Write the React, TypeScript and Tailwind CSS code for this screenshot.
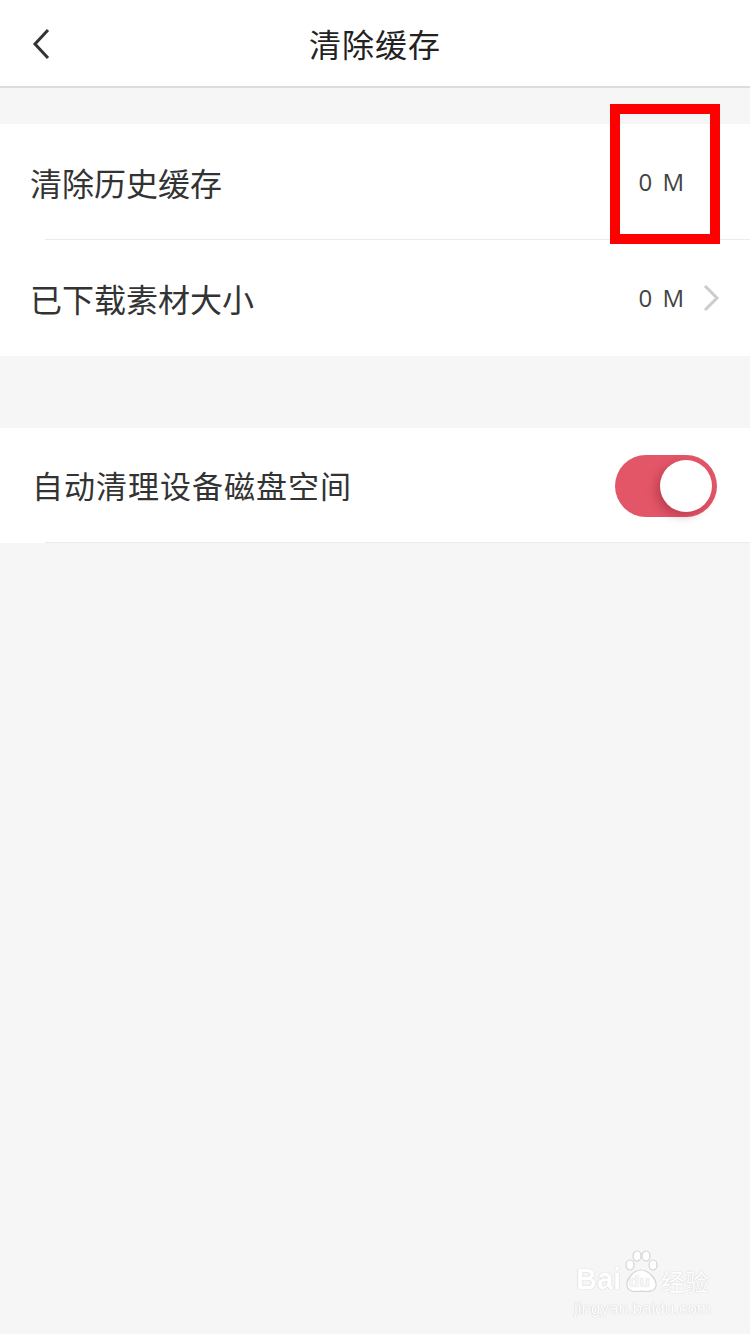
import React from 'react';

const cjk = { fontFamily: '"Noto Sans CJK SC", "Noto Sans", sans-serif' };
const latin = { fontFamily: 'Arial, "Liberation Sans", sans-serif' };

function Row({ label, big, right, divider, h = 'h-[115px]' }: { label: string; big?: boolean; right?: React.ReactNode; divider?: boolean; h?: string }) {
    return (
        <div className={`relative bg-white ${h} flex items-center justify-between pl-[30px] pr-[30px]`}>
            <span className={big ? 'text-[31px] text-[#333] tracking-[1px] pl-[2px]' : 'text-[32px] text-[#333]'}>{label}</span>
            {right}
            {/* divider line, inset from the left */}
            {divider && <div className="absolute left-[45px] right-0 bottom-0 h-px bg-[#ebebeb]" />}
        </div>
    );
}

function Value({ arrow }: { arrow?: boolean }) {
    return (
        <div className="flex items-center">
            <span className="text-[24px] text-[#444] tracking-[2px]" style={{ fontFamily: '"Open Sans", sans-serif' }}>0 M</span>
            <svg width="18" height="30" viewBox="0 0 18 30" className={arrow ? 'ml-[16px]' : 'ml-[16px] invisible'}>
                <path d="M3 3 L15 15 L3 27" fill="none" stroke="#cccccc" strokeWidth="3" />
            </svg>
        </div>
    );
}

function App() {
    return (
        <div className="relative w-[750px] h-[1334px] bg-[#f6f6f6] overflow-hidden" style={cjk}>
            {/* Header */}
            <div className="relative h-[88px] bg-white border-b-2 border-[#dddddd] flex items-center justify-center">
                <svg width="22" height="32" viewBox="0 0 22 32" className="absolute left-[30px] top-[28px]">
                    <path d="M18 2 L5 16 L18 30" fill="none" stroke="#333" strokeWidth="3" />
                </svg>
                <span className="text-[32px] text-[#222] tracking-[1px]">清除缓存</span>
            </div>

            <div className="mt-[36px]">
                <Row label="清除历史缓存" right={<Value />} divider h="h-[116px]" />
                <Row label="已下载素材大小" right={<Value arrow />} h="h-[116px]" />
            </div>

            <div className="mt-[72px]">
                <Row
                    big
                    label="自动清理设备磁盘空间"
                    right={
                        <div className="relative w-[102px] h-[62px] rounded-full bg-[#e35668] mr-[3px]">
                            <div className="absolute right-[5px] top-[5px] w-[52px] h-[52px] rounded-full bg-white shadow-[-4px_4px_10px_rgba(120,20,40,0.35)]" />
                        </div>
                    }
                    divider
                />
            </div>

            {/* red annotation box */}
            <div className="absolute left-[610px] top-[104px] w-[110px] h-[140px] border-[10px] border-[#ff0000]" />

            {/* watermark */}
            <div className="absolute left-[574px] top-[1250px] flex flex-col items-center text-white" style={{ textShadow: '0 0 1px #cfcfcf, 0 0 1px #cfcfcf' }}>
                <div className="flex items-end">
                    <span className="text-[29px] font-bold leading-none" style={latin}>Bai</span>
                    <span className="relative w-[36px] h-[44px] mx-[2px]">
                        <svg width="36" height="44" viewBox="0 0 36 44" className="absolute inset-0">
                            <g fill="#fff" stroke="#d4d4d4" strokeWidth="1.2">
                                <ellipse cx="7" cy="15" rx="4" ry="5" />
                                <ellipse cx="14" cy="6" rx="4" ry="5" />
                                <ellipse cx="23" cy="6" rx="4" ry="5" />
                                <ellipse cx="30" cy="15" rx="4" ry="5" />
                                <path d="M18 20 C 10 20 3 30 4 36 C 5 42 12 42 18 41 C 24 42 32 42 33 36 C 34 30 26 20 18 20 Z" />
                            </g>
                        </svg>
                        <span className="absolute left-[6px] bottom-[4px] text-[17px] leading-none font-bold text-[#f6f6f6]" style={{ ...latin, textShadow: '0 0 1px #c8c8c8' }}>du</span>
                    </span>
                    <span className="text-[24px] leading-none mb-[1px]">经验</span>
                </div>
                <span className="text-[17px] mt-[6px] leading-none" style={latin}>jingyan.baidu.com</span>
            </div>
        </div>
    );
}

export default App;
